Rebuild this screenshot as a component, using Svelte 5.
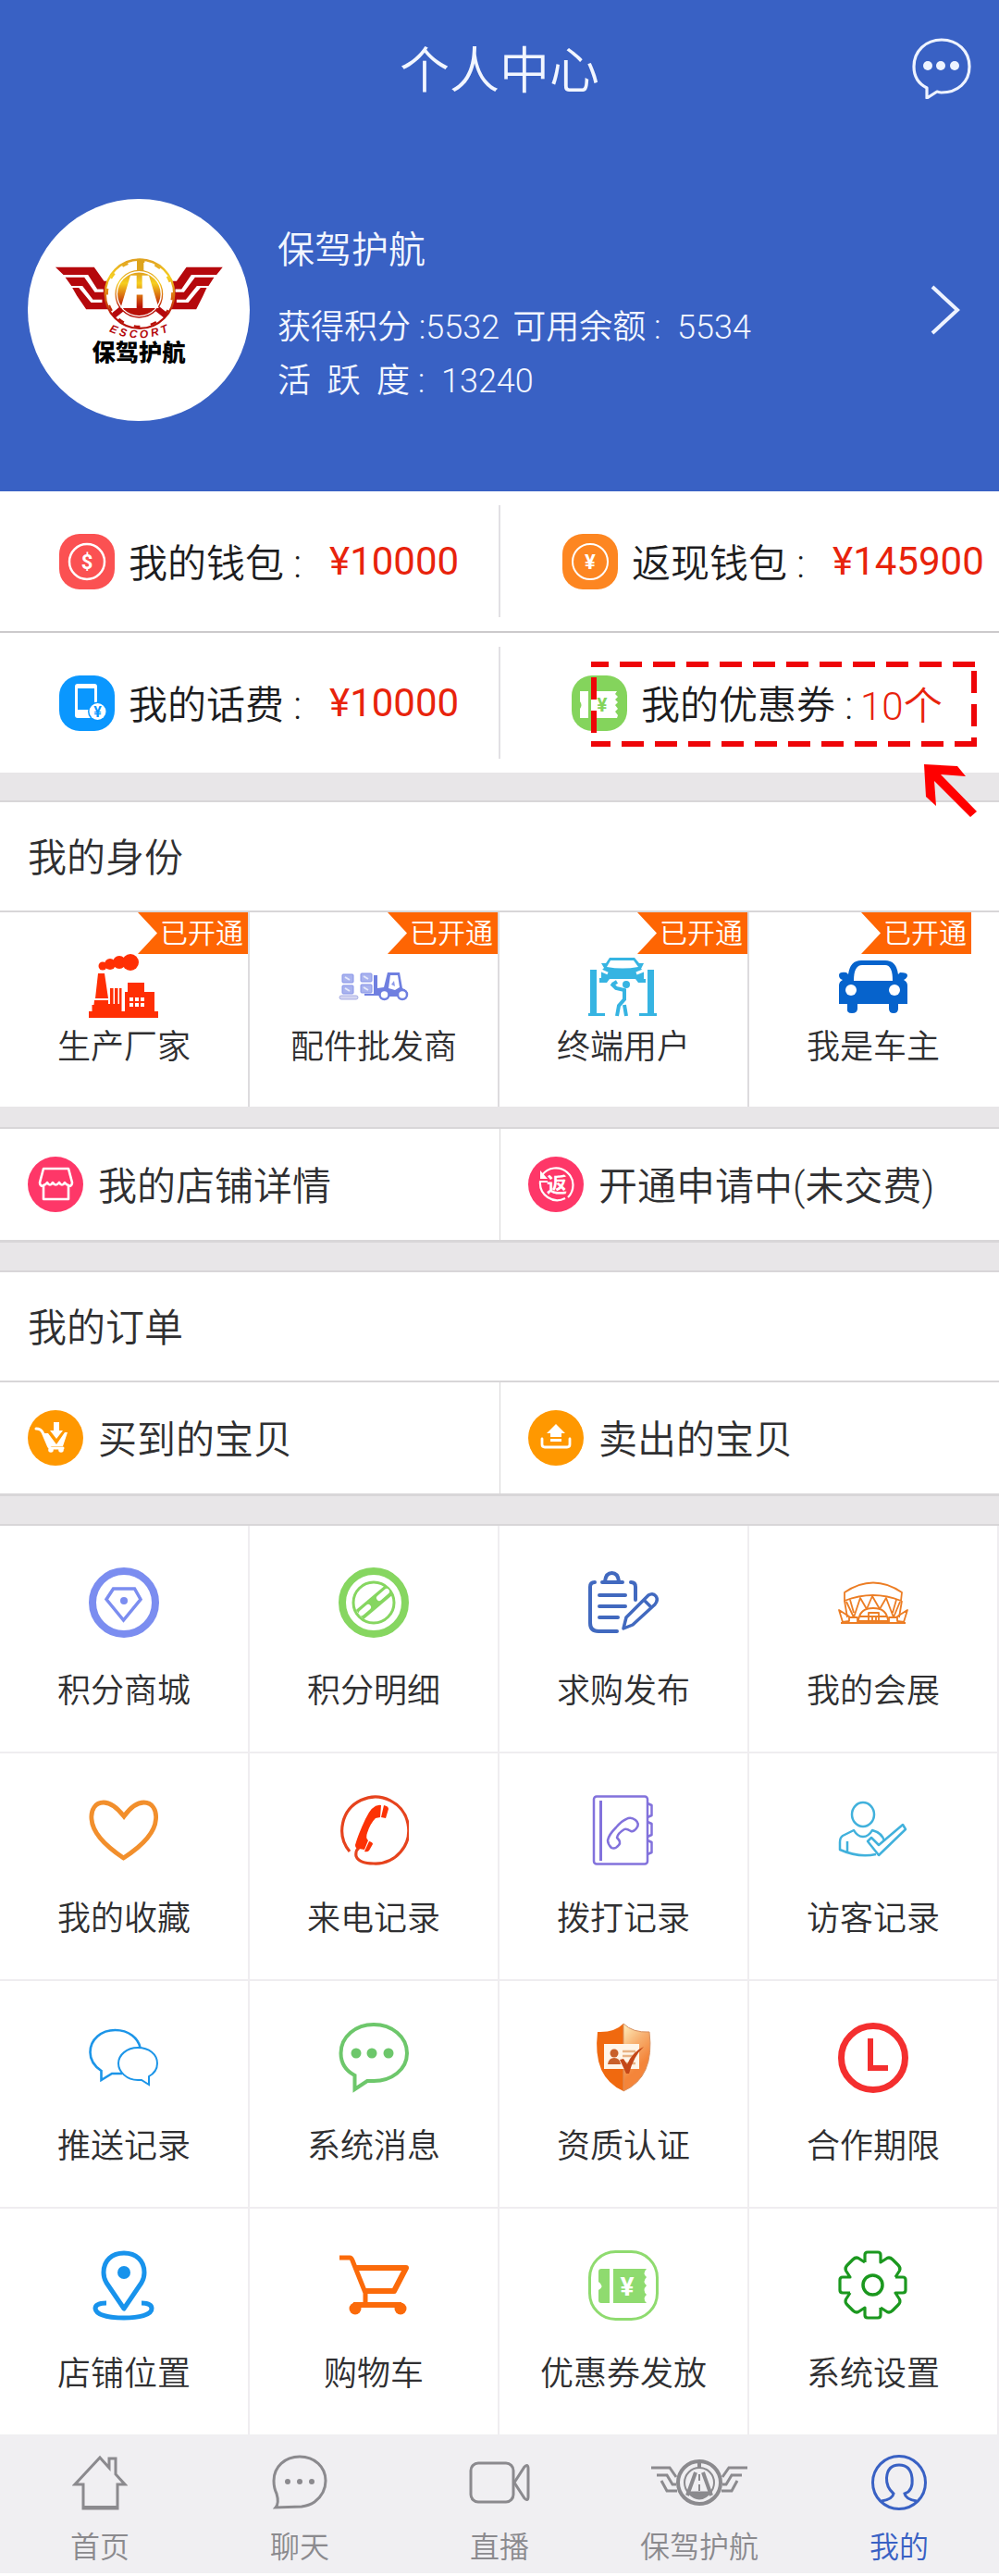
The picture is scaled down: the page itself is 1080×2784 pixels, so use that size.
<script lang="ts">
    interface Entry {
        icon: string;
        label: string;
    }

    const wallets = [
        { icon: "dollar", label: "我的钱包", value: "¥10000" },
        { icon: "yen", label: "返现钱包", value: "¥145900" },
        { icon: "phone-fee", label: "我的话费", value: "¥10000" },
        { icon: "coupon", label: "我的优惠券", value: "10个", marked: true },
    ];

    const roles: Entry[] = [
        { icon: "factory", label: "生产厂家" },
        { icon: "forklift", label: "配件批发商" },
        { icon: "lift", label: "终端用户" },
        { icon: "car", label: "我是车主" },
    ];

    const shop: Entry[] = [
        { icon: "store", label: "我的店铺详情" },
        { icon: "refund", label: "开通申请中(未交费)" },
    ];

    const orders: Entry[] = [
        { icon: "bought", label: "买到的宝贝" },
        { icon: "sold", label: "卖出的宝贝" },
    ];

    const services: Entry[] = [
        { icon: "diamond", label: "积分商城" },
        { icon: "points", label: "积分明细" },
        { icon: "clipboard", label: "求购发布" },
        { icon: "expo", label: "我的会展" },
        { icon: "heart", label: "我的收藏" },
        { icon: "incoming", label: "来电记录" },
        { icon: "phonebook", label: "拨打记录" },
        { icon: "visitor", label: "访客记录" },
        { icon: "push", label: "推送记录" },
        { icon: "message", label: "系统消息" },
        { icon: "shield", label: "资质认证" },
        { icon: "clock", label: "合作期限" },
        { icon: "location", label: "店铺位置" },
        { icon: "cart", label: "购物车" },
        { icon: "ticket", label: "优惠券发放" },
        { icon: "gear", label: "系统设置" },
    ];

    const tabs: Entry[] = [
        { icon: "home", label: "首页" },
        { icon: "chat", label: "聊天" },
        { icon: "live", label: "直播" },
        { icon: "escort", label: "保驾护航" },
        { icon: "me", label: "我的" },
    ];

    let activeTab = $state("me");
</script>

{#snippet smallIcon(name: string)}
    <svg class="icon-sm" viewBox="0 0 60 60" aria-hidden="true">
        {#if name === "dollar"}
            <rect width="60" height="60" rx="22" fill="#fb5152" />
            <circle cx="30" cy="30" r="19" fill="none" stroke="#fff" stroke-width="2.5" />
            <text class="glyph" x="30" y="38" font-size="22" fill="#fff">$</text>
        {:else if name === "yen"}
            <rect width="60" height="60" rx="22" fill="#fd8621" />
            <circle cx="30" cy="30" r="19" fill="none" stroke="#fff" stroke-width="2" />
            <text class="glyph" x="30" y="38" font-size="22" fill="#fff">¥</text>
        {:else if name === "phone-fee"}
            <rect width="60" height="60" rx="22" fill="#0a97fe" />
            <rect x="17" y="9" width="24" height="37" rx="3" fill="#fff" />
            <rect x="20" y="14" width="18" height="23" fill="#0a97fe" />
            <circle cx="41.500" cy="39" r="10.500" fill="#0a97fe" />
            <circle cx="41.500" cy="39" r="9" fill="#fff" />
            <text class="glyph" x="41.500" y="45" font-size="16" fill="#0a97fe">¥</text>
        {:else if name === "coupon"}
            <rect width="60" height="60" rx="22" fill="#84d45c" />
            <path d="M9 17h9v29h-9v-10q3-4 0-8z" fill="#fff" />
            <path d="M21 17h28l-2 3 3 3-3 3 3 3-3 3 3 4-3 3 3 4-1 3h-28z" fill="#fff" />
            <text class="glyph" x="33" y="39" font-size="21" fill="#84d45c">¥</text>
        {:else if name === "store"}
            <circle cx="30" cy="30" r="30" fill="#fe3768" />
            <g fill="none" stroke="#fff" stroke-width="2.6" stroke-linejoin="round" stroke-linecap="round">
                <path d="M17 13h27l4 15q0 4-4 4v14h-27v-14q-4 0-4-4z" />
                <path d="M17 31q3-1 4-3q3 5 6 0q3 5 7 0q3 5 6 0q1 2 4 3" />
            </g>
        {:else if name === "refund"}
            <circle cx="30" cy="30" r="30" fill="#fe3768" />
            <path d="M15 20a18.500 18.500 0 1 1 28 24M40 45a18.500 18.500 0 0 1-27-18h8" fill="none" stroke="#fff" stroke-width="2.2" />
            <path d="M13 15v9h8z" fill="#fff" />
            <text class="glyph glyph-cn" x="31" y="38" font-size="22" fill="#fff">返</text>
        {:else if name === "bought"}
            <circle cx="30" cy="30" r="30" fill="#ff9800" />
            <path d="M9 20q5 0 7 4l6 14q1 3 4 3h12" fill="none" stroke="#fff" stroke-width="3" stroke-linecap="round" />
            <path d="M17 25h5l9 12 9-13h3l-5 15h-16z" fill="#fff" />
            <path d="M28 13h6v9h4l-7 9-7-9h4z" fill="#fff" />
            <circle cx="25" cy="43" r="2.800" fill="#fff" />
            <circle cx="36" cy="43" r="2.800" fill="#fff" />
        {:else if name === "sold"}
            <circle cx="30" cy="30" r="30" fill="#ff9800" />
            <path d="M30 15l10 10h-4v4h-12v-4h-4z" fill="#fff" />
            <path d="M24 31h12v3h-12z" fill="#fff" />
            <path d="M15 31v6q0 3 3 3h24q3 0 3-3v-6" fill="none" stroke="#fff" stroke-width="2.800" stroke-linecap="round" />
        {/if}
    </svg>
{/snippet}

{#snippet largeIcon(name: string)}
    <svg class="icon-lg" viewBox="0 0 76 76" fill="none" aria-hidden="true">
        {#if name === "factory"}
            <g fill="#ff2f04">
                <circle cx="15" cy="16" r="4.500" />
                <circle cx="23" cy="14" r="6" />
                <circle cx="33" cy="12" r="7" />
                <circle cx="45" cy="12" r="9" />
                <path d="M10 24h7l4 27h-14zM6 53h15v4h2v-17h3.500v17h1.500v-17h3.500v17h1.500v-17h2.500v26h-32v-8h2z" />
                <path d="M42 34h18v10h11v21h4v7h-75v-7h39v-21h3z" />
            </g>
            <path d="M44 50h4v4h-4zM50 50h4v4h-4zM56 50h4v4h-4zM44 56h4v4h-4zM50 56h4v4h-4zM56 56h4v4h-4z" fill="#fff" />
        {:else if name === "forklift"}
            <g fill="#a9b3ee" stroke="#8794e8">
                <rect x="4" y="25" width="12" height="9" rx="1" />
                <rect x="4" y="37" width="12" height="9" rx="1" />
                <rect x="24" y="24" width="12" height="9" rx="1" />
                <rect x="24" y="36" width="12" height="9" rx="1" />
            </g>
            <path d="M7 28l5 3M7 40l5 3M27 27l5 3M27 39l5 3" stroke="#e6e9fb" stroke-width="2" />
            <rect x="1" y="48" width="20" height="4" rx="2" fill="#d3d5f0" stroke="#a9aee4" />
            <path d="M38 26h4v14l7-1 4-16h13l3 17q6 2 6 7l-7 2h-17l-5-1h-18v-2h10z" fill="#6f7fe0" />
            <path d="M56 26h8l2 13-5 3-7-2z" fill="#fff" />
            <path d="M57 36l3-4 1 6z" fill="#8d9ae9" />
            <circle cx="49.500" cy="47" r="5" fill="#fff" stroke="#6f7fe0" stroke-width="2.500" />
            <circle cx="69" cy="47" r="5" fill="#fff" stroke="#6f7fe0" stroke-width="2.500" />
        {:else if name === "lift"}
            <g fill="#36b4e2">
                <path d="M2 20h7v47h9v3h-18v-3h2zM64 20h7v47h3v3h-19v-3h9z" />
                <path d="M14 13h5l4-6h27l5 6h5l-3 6 3 2v9h2v4h-8l-3-4h-28l-3 4h-8v-5h2v-8l3-3z" />
                <circle cx="41" cy="36" r="4" />
            </g>
            <path d="M20 17l4-7h25l5 7q-17 3-34 0z" fill="#fff" />
            <path d="M12 20l9 4M62 20l-10 4" stroke="#fff" stroke-width="3" />
            <path d="M25 35l5 5 9 2v10l-6 7-2 11M39 58l2 12M26 36l5-3" stroke="#36b4e2" stroke-width="4" />
        {:else if name === "car"}
            <path d="M11 25q2-15 14-15h26q12 0 14 15l2-2q8 0 8 3t-4 5q4 2 4 6v20h-10v5q0 5-5 5t-5-5v-5h-34v5q0 5-6 5t-5-5v-5h-9v-20q0-4 4-6-4-1-4-5t8-3z" fill="#0663cc" />
            <path d="M17 32q0-17 9-17h25q8 0 8 17z" fill="#fff" />
            <circle cx="14" cy="42" r="6" fill="#fff" />
            <circle cx="61" cy="42" r="6" fill="#fff" />
        {:else if name === "diamond"}
            <circle cx="38" cy="38" r="34" stroke="#7b8df0" stroke-width="8" />
            <path d="M26.500 23h23l6.500 11.500-18.500 22.500-18.500-22.500z" stroke="#7b8df0" stroke-width="3.500" />
            <circle cx="38" cy="36" r="4" fill="#7b8df0" />
        {:else if name === "points"}
            <circle cx="38" cy="38" r="34" stroke="#86d660" stroke-width="8" />
            <circle cx="38" cy="38" r="22" stroke="#86d660" stroke-width="3" />
            <path d="M23 51l32-27" stroke="#86d660" stroke-width="13" />
            <path d="M25 49l7-6M44 33l8-7" stroke="#fff" stroke-width="6" stroke-linecap="round" />
        {:else if name === "clipboard"}
            <g stroke="#4169bf" stroke-width="4" stroke-linecap="round" stroke-linejoin="round">
                <path d="M7 16q-5 0-5 5v39q0 9 9 9h20M46 16q5 0 5 5v14" />
                <path d="M15 16h22M18 15q1-9 7.500-9t7.500 9" />
                <path d="M12 30h28M12 42h28M12 54h20" />
                <path d="M38 66l3-12 24-24q5-3 8 1t-1 9l-24 22zM60 35l8 8" stroke-width="3.500" />
            </g>
        {:else if name === "expo"}
            <g stroke="#ec7d24" stroke-width="1.800" stroke-linejoin="round">
                <path d="M7 27q31-21 62 0l-1 9q-30-12-61 0z" />
                <path d="M7 36l3 18M69 36l-3 18M9 37l8 17 7-21 7 12 6-14 8 14 7-12 8 21 7-17M13 35l4 14M63 35l-4 14" />
                <path d="M22 58q1-14 16-14t16 14zM33 49h11v9h-11zM37 52v6M41 52v6M24 53h28" />
                <path d="M3 60h70M1 46l4 13 7-1v-5zM75 46l-4 13-7-1v-5zM12 54h9v5M64 54h-9v5" />
            </g>
        {:else if name === "heart"}
            <path d="M38 23c-7-9-15-15-22-15c-9 0-14 8-13 18c1 16 18 31 34.500 42c17-11 34-26 35-42c1-10-4-18-13-18c-8 0-15 6-21.500 15z" stroke="#f28f2c" stroke-width="4.800" />
        {:else if name === "incoming"}
            <path d="M12 61a36 36 0 1 1 26 13q-16 0-19-8q-1-6 3-9" stroke="#e6431d" stroke-width="3.200" />
            <path d="M46 11q-9-2-17 15t-11 28q0 4 4 4l6 1 4-10q-3-3-1-8 3-10 9-16l5-1z" fill="#fc3205" />
            <path d="M49 11q5 1 5 4l-3 10-5-1zM33 50q4 1 4 3l-4 7q-2 2-5 1z" fill="#fc3205" />
        {:else if name === "phonebook"}
            <g stroke="#8272dc" stroke-width="2.500" stroke-linejoin="round">
                <rect x="6" y="1.500" width="58" height="73" rx="3" />
                <path d="M13.500 6v65" stroke-width="3" />
                <path d="M64 9l4.500 2v11l-4.500 2M64 29l4.500 2v12l-4.500 2M64 49l4.500 2v11l-4.500 2" />
                <path d="M41 26q5-3 10 1t1 9q-3 4-6 3-5-3-7-2-7 4-8 9 5 5 2 8-4 5-8 3-4-4-4-8 1-6 9-14 6-7 11-9z" />
            </g>
        {:else if name === "visitor"}
            <g stroke="#41b1dc" stroke-width="2.500" stroke-linejoin="round">
                <ellipse cx="27" cy="21" rx="12" ry="13" />
                <path d="M41 64q-19 4-39-5v-8q0-5 3-7l12-6q4 7 10 7t10-7q11 3 13 12M10 50v11" />
                <path d="M32 50l4-4 8 8 26-22 3 5-29 28z" />
            </g>
        {:else if name === "push"}
            <g stroke="#1c95e8" stroke-width="2.600">
                <path d="M36 55h-11l-11.500 7v-10q-12-8-12-20c0-14 12-24 27-24s25 9 27 19" />
                <path d="M65 67v-9q9-5 9-14c0-10-9-17-21-17s-21 8-21 17 9 18 21 18h4z" stroke-width="2" />
            </g>
        {:else if name === "message"}
            <path d="M38 63h-7l-13.500 9v-15q-15-8-15-24c0-18 16-31 35.500-31s36 13 36 31-17 30-36 30z" stroke="#6dc76b" stroke-width="4" />
            <g fill="#6dc76b">
                <circle cx="19" cy="33" r="5.500" />
                <circle cx="36" cy="33" r="5.500" />
                <circle cx="54" cy="33" r="5.500" />
            </g>
        {:else if name === "shield"}
            <defs>
                <linearGradient id="shieldRight" x1="0" y1="0" x2="0.4" y2="1">
                    <stop offset="0" stop-color="#fff0c0" />
                    <stop offset="0.4" stop-color="#f7b070" />
                    <stop offset="0.75" stop-color="#f4853a" />
                </linearGradient>
            </defs>
            <path d="M38 1q-10 10-28 9-6 49 28 64z" fill="#f0690f" />
            <path d="M38 1q10 10 28 9 6 49-28 64z" fill="url(#shieldRight)" stroke="#d89060" />
            <rect x="17" y="23" width="38" height="27" fill="#fff5e8" />
            <circle cx="28" cy="33" r="4.500" fill="#c8602a" />
            <path d="M21 45q1-7 7-7t7 7z" fill="#c8602a" />
            <path d="M37 31h14M37 36h13M37 44h14" stroke="#e8b284" stroke-width="2.500" />
            <path d="M34 40l4-1 4 6q6-14 18-19-11 10-16 29h-3z" fill="#c44718" />
        {:else if name === "clock"}
            <circle cx="38" cy="38" r="34.500" stroke="#f42f2f" stroke-width="7" />
            <path d="M35 17v32h19" stroke="#f42f2f" stroke-width="6" />
        {:else if name === "location"}
            <g stroke="#1893ec" stroke-width="5" stroke-linejoin="round">
                <path d="M38 63l-19-28q-3-5-3-11c0-13 9-21 22-21s22 8 22 21q0 6-3 11z" />
                <path d="M19 57q-12 0-12 6c1 7 15 10 31 10s30-3 30-10q0-6-11-6" />
            </g>
            <circle cx="38" cy="24" r="7" fill="#1893ec" />
        {:else if name === "cart"}
            <g stroke="#fb6a0a" stroke-width="6" stroke-linejoin="round">
                <path d="M1 8h11q2 0 3 3l14 35v12" stroke-width="5" />
                <path d="M18 19h55l-13 25h-32M16 59h52" />
            </g>
            <circle cx="18" cy="63" r="6.500" fill="#fb6a0a" />
            <circle cx="67" cy="63" r="6.500" fill="#fb6a0a" />
        {:else if name === "ticket"}
            <rect x="1.500" y="1.500" width="73" height="73" rx="28" stroke="#8fdb6f" stroke-width="3" />
            <path d="M14 20h9v37h-9q-3 0-3-3v-11q7-4 0-9v-11q0-3 3-3z" fill="#8fdb6f" />
            <path d="M27 20h36q-5 5 0 9-5 5 0 9-5 5 0 10-5 4 0 9h-36z" fill="#8fdb6f" />
            <text class="glyph" x="42" y="49" font-size="28" fill="#fff">¥</text>
        {:else if name === "gear"}
            <g stroke="#1b981f" stroke-width="3.200" stroke-linejoin="round">
                {#each [0, 90, 180, 270] as angle}
                    <path
                        d="M29 13v-8q0-3 3-3h11q3 0 3 3v8l7-4.500q3-1.500 6 1.500l6 6q3 3 1.500 6l-4.500 7"
                        transform="rotate({angle} 37.500 37.500)"
                    />
                {/each}
                <circle cx="37.500" cy="37.500" r="10.500" stroke-width="3.500" />
            </g>
        {/if}
    </svg>
{/snippet}

{#snippet tabIcon(name: string)}
    <svg
        class="icon-tab"
        viewBox={name === "escort" ? "-22 0 104 60" : name === "live" ? "-3 0 66 60" : "0 0 60 60"}
        fill="none"
        stroke="currentColor"
        stroke-width="3"
        aria-hidden="true"
    >
        {#if name === "home"}
            <path d="M30 3l10 11v-10h7v17l10 11h-8v26h-37v-26h-9z" />
            <path d="M12 57h37" stroke-width="4" />
        {:else if name === "chat"}
            <path d="M4 57q4-5 1-15-3-6-3-14c0-15 12-26 28-26s28 11 28 26q0 14-12 23-6 4-14 5z" />
            <g fill="currentColor" stroke="none">
                <circle cx="17" cy="29" r="3" />
                <circle cx="30" cy="29" r="3" />
                <circle cx="43" cy="29" r="3" />
            </g>
        {:else if name === "live"}
            <rect x="-1" y="9" width="46" height="42" rx="8" />
            <path d="M46 30l11-17q4-4 4 2v30q0 6-4 2z" />
        {:else if name === "escort"}
            <circle cx="30" cy="30" r="23" stroke-width="4" />
            <circle cx="30" cy="30" r="16" stroke-width="2" />
            <path d="M30 6v9M26 19l-9 25M34 19l9 25" stroke-width="4" />
            <path d="M19 41h22q-11 12-22 0z" fill="currentColor" />
            <path d="M30 21v7M30 32v7" stroke-width="2" />
            <path d="M-22 14h20l7 10M-16 22h11l6 10h4M-11 28l6 11h11" />
            <path d="M82 14h-20l-7 10M76 22h-11l-6 10h-4M71 28l-6 11h-11" />
        {:else if name === "me"}
            <circle cx="30" cy="30" r="28.500" />
            <path d="M11 50q12-2 13-8-8-7-7.500-17 1-14 13.500-14t14 14-8 17q1 6 13 8" />
        {/if}
    </svg>
{/snippet}

{#snippet linkRow(items: Entry[])}
    <div class="pair">
        {#each items as item}
            <a class="pair-cell" href="#{item.icon}">
                {@render smallIcon(item.icon)}
                <span class="pair-label">{item.label}</span>
            </a>
        {/each}
    </div>
{/snippet}

<div class="page">
    <header class="hero">
        <div class="topbar">
            <h1>个人中心</h1>
            <button class="chat-btn" aria-label="消息">
                <svg width="64" height="66" viewBox="0 0 64 66" aria-hidden="true">
                    <path
                        d="M32 59q-2 0-5-1l-11 7v-11q-14-7-14-23c0-17 13-29 30-29s30 12 30 29-13 28-30 28z"
                        fill="none"
                        stroke="#eef3ff"
                        stroke-width="3.200"
                        stroke-linejoin="round"
                    />
                    <g fill="#eef3ff">
                        <circle cx="17" cy="30" r="5" />
                        <circle cx="31" cy="30" r="5" />
                        <circle cx="46" cy="30" r="5" />
                    </g>
                </svg>
            </button>
        </div>

        <a class="profile" href="#profile">
            <svg class="avatar" viewBox="0 15 722 722" role="img" aria-label="保驾护航">
                <defs>
                    <linearGradient id="gold" x1="0" y1="0" x2="0" y2="1">
                        <stop offset="0" stop-color="#e0a020" />
                        <stop offset="0.25" stop-color="#f6d020" />
                        <stop offset="0.55" stop-color="#d86a10" />
                        <stop offset="0.8" stop-color="#b81008" />
                    </linearGradient>
                    <path id="arc" d="M244 436Q361 498 478 436" />
                </defs>
                <circle cx="361" cy="376" r="361" fill="#fff" />
                <g fill="#b5080c">
                    <path d="M90 237H216L248 282H264V374H190L160 330L145 304H166L206 352H242V342H212L178 298H142L122 270H184L218 318H246V308H226L196 262H116Z" />
                    <path d="M634 237H516L484 282H462V374H548L570 330L582 304H562L522 352H484V342H514L550 298H588L606 270H544L508 318H480V308H500L532 262H614Z" />
                </g>
                <circle cx="364" cy="324" r="112" fill="#fff" stroke="url(#gold)" stroke-width="7" />
                <circle cx="364" cy="324" r="106" fill="none" stroke="url(#gold)" stroke-width="7" stroke-dasharray="20 35" />
                <path d="M355 210h22v44h-22z" fill="#dda41c" />
                <path d="M274 386l30-24 10 16-30 24zM454 386l-30-24-10 16 30 24z" fill="#b5080c" />
                <circle cx="362" cy="324" r="76" fill="#fff" stroke="url(#gold)" stroke-width="4" />
                <circle cx="362" cy="324" r="70" fill="url(#gold)" />
                <path d="M334 264H354V306H372V264H394L426 370H374V326H354V370H302Z" fill="#fff" />
                <text class="escort" font-size="36" fill="#b5080c">
                    <textPath href="#arc" startOffset="50%">E S C O R T</textPath>
                </text>
                <text class="brand" x="361" y="540" font-size="76">保驾护航</text>
            </svg>
            <div class="profile-info">
                <p class="name">保驾护航</p>
                <p class="stat"><span>获得积分 :5532</span><span>可用余额 :&nbsp; 5534</span></p>
                <p class="stat">活&nbsp; 跃&nbsp; 度 :&nbsp; 13240</p>
            </div>
            <svg class="chevron" width="34" height="56" viewBox="0 0 34 56" aria-hidden="true">
                <path d="M4 3l27 25-27 25" fill="none" stroke="#eef3ff" stroke-width="4" />
            </svg>
        </a>
    </header>

    <section class="wallets">
        {#each wallets as item}
            <a class="wallet" class:wallet-marked={item.marked} href="#{item.icon}">
                {@render smallIcon(item.icon)}
                <span class="wallet-label">{item.label} :</span>
                <span class="wallet-value">{item.value}</span>
                {#if item.marked}
                    <svg class="marker" width="418" height="168" viewBox="0 0 418 168" aria-hidden="true">
                        <g fill="none" stroke="#ee0508" stroke-width="6">
                            <path d="M0 3h418" stroke-dasharray="24 12" stroke-dashoffset="5" />
                            <path d="M0 89h418" stroke-dasharray="24 12" stroke-dashoffset="3" />
                            <path d="M3 17v75" stroke-dasharray="24 12" />
                            <path d="M414 10v82" stroke-dasharray="24 12" />
                        </g>
                        <path d="M360 111l36 2 9 11-27-2 39 40-7 6-39-39 2 27-11-10z" fill="#ff0000" />
                    </svg>
                {/if}
            </a>
        {/each}
    </section>

    <section class="block">
        <h2>我的身份</h2>
        <div class="roles">
            {#each roles as role}
                <a class="role" href="#{role.icon}">
                    <span class="ribbon">已开通</span>
                    {@render largeIcon(role.icon)}
                    <span class="cell-label">{role.label}</span>
                </a>
            {/each}
        </div>
    </section>

    <section class="block block-near">
        {@render linkRow(shop)}
    </section>

    <section class="block">
        <h2>我的订单</h2>
        {@render linkRow(orders)}
    </section>

    <section class="block">
        <div class="services">
            {#each services as service}
                <a class="service" href="#{service.icon}">
                    {@render largeIcon(service.icon)}
                    <span class="cell-label">{service.label}</span>
                </a>
            {/each}
        </div>
    </section>

    <nav class="tabbar">
        {#each tabs as tab}
            <button class="tab" class:tab-active={activeTab === tab.icon} onclick={() => (activeTab = tab.icon)}>
                {@render tabIcon(tab.icon)}
                <span>{tab.label}</span>
            </button>
        {/each}
    </nav>
</div>

<style>
    :global(body) {
        margin: 0;
        background: #fff;
    }

    .page {
        --blue: #3961c4;
        --band: #e8e6e8;
        --rule: #d8d6d8;
        --rule-light: #efedf0;
        padding-bottom: 3px;
        color: #2f2f31;
        font-family: Roboto, "Noto Sans CJK SC", sans-serif;
        font-weight: 350;
        background: #fff;
    }

    a {
        color: inherit;
        text-decoration: none;
    }

    button {
        padding: 0;
        border: none;
        background: none;
        color: inherit;
        font: inherit;
        cursor: pointer;
    }

    h1,
    h2,
    p {
        margin: 0;
        font-weight: inherit;
    }

    svg {
        flex: none;
    }

    .glyph {
        font-family: Roboto, sans-serif;
        font-weight: 700;
        text-anchor: middle;
    }

    .glyph-cn {
        font-family: "Noto Sans CJK SC", sans-serif;
    }

    .icon-sm {
        width: 60px;
        height: 60px;
    }

    .icon-lg {
        width: 76px;
        height: 76px;
    }

    .icon-tab {
        height: 60px;
    }

    /* header */
    .hero {
        background: var(--blue);
        color: #f2f6ff;
    }

    .topbar {
        display: grid;
        grid-template-columns: 1fr auto 1fr;
        align-items: center;
        height: 148px;
        padding: 0 30px;
    }

    .topbar h1 {
        grid-column: 2;
        padding-top: 8px;
        font-size: 54px;
        line-height: 64px;
    }

    .chat-btn {
        display: flex;
        justify-self: end;
    }

    .profile {
        display: flex;
        align-items: center;
        gap: 30px;
        padding: 67px 42px 76px 30px;
    }

    .avatar {
        width: 240px;
        height: 240px;
    }

    .escort {
        font-family: "Liberation Sans", sans-serif;
        font-weight: 700;
        font-style: italic;
        text-anchor: middle;
    }

    .brand {
        font-family: "Noto Sans CJK SC", sans-serif;
        font-weight: 900;
        text-anchor: middle;
    }

    .profile-info {
        flex: 1;
        padding-top: 12px;
    }

    .name {
        margin-bottom: 24px;
        font-size: 40px;
        line-height: 60px;
    }

    .stat {
        display: flex;
        gap: 14px;
        font-size: 36px;
        line-height: 58px;
    }

    /* wallets */
    .wallets {
        display: grid;
        grid-template-columns: 1fr 1fr;
    }

    .wallet {
        position: relative;
        display: flex;
        align-items: center;
        height: 151px;
        padding-left: 64px;
        color: #1c1c1e;
        font-size: 42px;
        white-space: nowrap;
    }

    .wallet:nth-child(even) {
        padding-left: 68px;
    }

    .wallet:nth-child(even)::before {
        content: "";
        position: absolute;
        top: 15px;
        bottom: 15px;
        left: -1px;
        width: 2px;
        background: #e2e0e4;
    }

    .wallet:nth-child(-n + 2) {
        border-bottom: 2px solid #cccacc;
    }

    .wallet-label {
        margin-left: 15px;
    }

    .wallet-value {
        margin-left: 30px;
        color: #e8230c;
        font-weight: 400;
    }

    .wallet.wallet-marked {
        padding-left: 78px;
    }

    .wallet-marked .wallet-value {
        margin-left: 8px;
        font-weight: 350;
    }

    .wallet-label,
    .pair-label {
        padding-bottom: 3px;
    }

    .marker {
        position: absolute;
        top: 31px;
        left: 99px;
        z-index: 1;
    }

    /* sections */
    .block {
        border-top: 30px solid var(--band);
    }

    .block-near {
        border-top-width: 22px;
    }

    .block h2 {
        padding: 4px 0 0 30px;
        border-top: 2px solid var(--rule);
        border-bottom: 2px solid var(--rule);
        font-size: 42px;
        line-height: 113px;
    }

    .roles,
    .services {
        display: grid;
        grid-template-columns: repeat(4, 1fr);
    }

    .role,
    .service {
        position: relative;
        display: flex;
        flex-direction: column;
        align-items: center;
        border-right: 2px solid #dddbde;
    }

    .role {
        gap: 2px;
        padding: 42px 0 38px;
    }

    .role:last-child {
        border-right-color: transparent;
    }

    .cell-label {
        font-size: 36px;
        line-height: 52px;
    }

    .ribbon {
        position: absolute;
        top: 0;
        right: 0;
        padding: 0 5px 0 24px;
        background: #fe6503;
        clip-path: polygon(0 0, 100% 0, 100% 100%, 0 100%, 21px 50%);
        color: #fff;
        font-size: 30px;
        line-height: 45px;
    }

    .role:last-child .ribbon {
        right: 28px;
    }

    .pair {
        display: grid;
        grid-template-columns: 1fr 1fr;
        border-bottom: 3px solid var(--rule);
    }

    .block > .pair:first-child {
        border-top: 2px solid var(--rule);
    }

    .pair-cell {
        display: flex;
        align-items: center;
        gap: 16px;
        height: 120px;
        padding-left: 30px;
        font-size: 42px;
    }

    .pair-cell + .pair-cell {
        border-left: 1px solid var(--rule);
    }

    .services {
        border-top: 2px solid var(--rule);
    }

    .service {
        gap: 32px;
        padding: 45px 0 39px;
        border-right-color: var(--rule-light);
        border-bottom: 2px solid var(--rule-light);
    }

    .service:nth-last-child(-n + 4) {
        border-bottom: none;
    }

    /* bottom tabs */
    .tabbar {
        display: grid;
        grid-template-columns: repeat(5, 1fr);
        background: #f0eff2;
    }

    .tab {
        display: flex;
        flex-direction: column;
        align-items: center;
        gap: 18px;
        padding: 22px 0 6px;
        color: #8b8a8e;
        font-size: 32px;
        line-height: 44px;
    }

    .tab-active {
        color: var(--blue);
    }
</style>
